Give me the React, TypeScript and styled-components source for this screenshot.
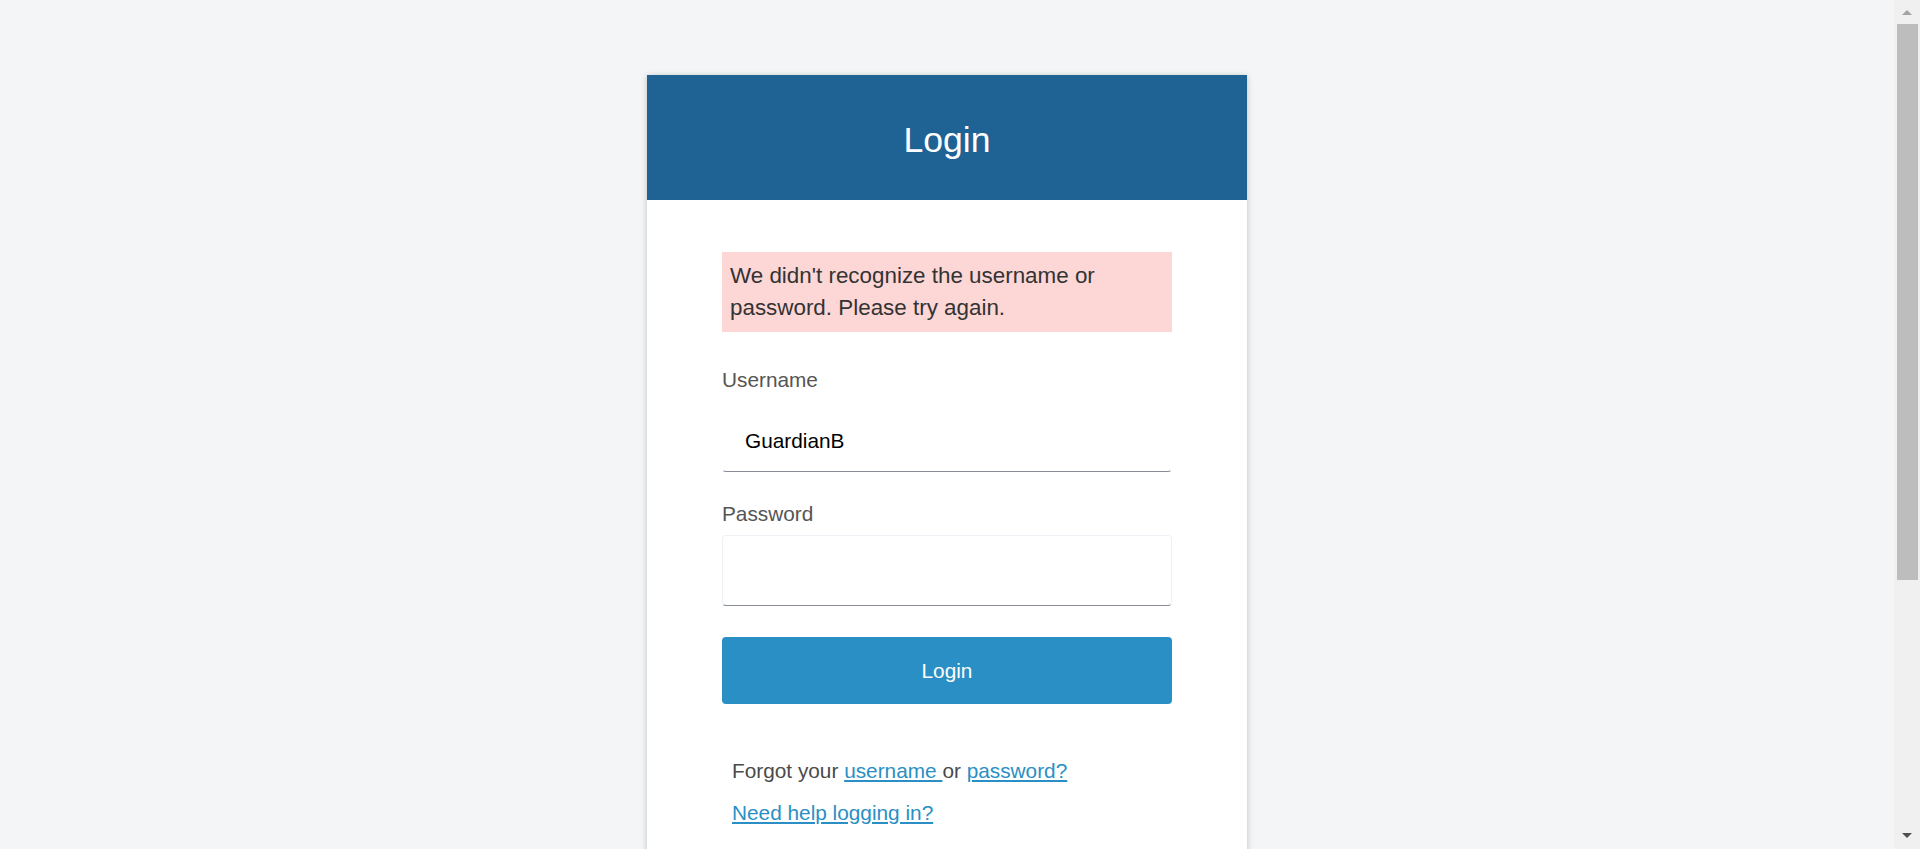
import React from "react";
import styled, { createGlobalStyle } from "styled-components";

const GlobalStyle = createGlobalStyle`
  html, body {
    margin: 0;
    padding: 0;
    background: #f4f5f7;
    font-family: "Liberation Sans", Arial, Helvetica, sans-serif;
  }
  * { box-sizing: border-box; }
`;

const Page = styled.div`
  min-height: 1250px;
  padding-top: 75px;
  padding-right: 26px;
  display: flex;
  flex-direction: column;
  align-items: center;
`;

const Card = styled.div`
  width: 600px;
  background: #ffffff;
  box-shadow: 0 1px 6px rgba(0, 0, 0, 0.22);
`;

const Header = styled.div`
  height: 125px;
  padding-top: 7px;
  background: #1e6394;
  display: flex;
  align-items: center;
  justify-content: center;
`;

const Title = styled.h1`
  margin: 0;
  font-size: 35.6px;
  font-weight: 400;
  color: #ffffff;
  line-height: 1;
`;

const Body = styled.div`
  padding: 52px 75px 60px 75px;
  display: flex;
  flex-direction: column;
`;

const ErrorBox = styled.div`
  background: #fdd6d6;
  color: #333333;
  font-size: 22.4px;
  line-height: 32px;
  padding: 8px;
`;

const Label = styled.label<{ $top: number }>`
  display: block;
  margin-top: ${(p) => p.$top}px;
  font-size: 20.8px;
  line-height: 30px;
  color: #555555;
`;

const Input = styled.input<{ $outlined?: boolean }>`
  display: block;
  width: 100%;
  height: 71px;
  margin-top: 6px;
  padding: 9px 22px 0 22px;
  font-family: "Liberation Sans", Arial, Helvetica, sans-serif;
  font-size: 20.8px;
  color: #000000;
  background: #ffffff;
  border: 1px solid ${(p) => (p.$outlined ? "#eef2f6" : "#ffffff")};
  border-bottom: 1px solid #878c96;
  border-radius: 4px;
  outline: none;
`;

const Button = styled.button`
  margin-top: 31px;
  width: 100%;
  height: 67px;
  border: none;
  border-radius: 4px;
  background: #2a8fc4;
  color: #ffffff;
  font-family: "Liberation Sans", Arial, Helvetica, sans-serif;
  font-size: 20.8px;
  cursor: pointer;
`;

const Help = styled.div`
  margin-top: 52px;
  padding-left: 10px;
  display: flex;
  flex-direction: column;
  gap: 12px;
`;

const HelpLine = styled.p`
  margin: 0;
  font-size: 20.8px;
  line-height: 30px;
  color: #4a4a4a;
`;

const Link = styled.a`
  color: #2a8fc4;
  text-decoration: underline;
  cursor: pointer;
`;

/* Browser scrollbar as seen in the screenshot (overlays the page edge) */
const ScrollBar = styled.div`
  position: fixed;
  top: 0;
  right: 0;
  width: 26px;
  height: 100vh;
  background: #f0f0f0;
  display: flex;
  flex-direction: column;
  align-items: center;
`;

const ArrowSlot = styled.div<{ $dir: "up" | "down" }>`
  height: 24px;
  width: 100%;
  display: flex;
  justify-content: center;
  align-items: ${(p) => (p.$dir === "up" ? "flex-start" : "flex-end")};
`;

const Arrow = styled.div<{ $dir: "up" | "down"; $color: string }>`
  width: 0;
  height: 0;
  border-left: 5.5px solid transparent;
  border-right: 5.5px solid transparent;
  ${(p) =>
    p.$dir === "up"
      ? `border-bottom: 5px solid ${p.$color}; margin-top: 10px;`
      : `border-top: 5px solid ${p.$color}; margin-bottom: 11px;`}
`;

const Track = styled.div`
  flex: 1;
  width: 100%;
  padding: 0 2px 0 3px;
`;

const Thumb = styled.div`
  height: 556px;
  background: #bdbdbd;
`;

export default function App() {
  return (
    <>
      <GlobalStyle />
      <Page>
        <Card>
          <Header>
            <Title>Login</Title>
          </Header>
          <Body>
            <ErrorBox>
              We didn't recognize the username or password. Please try again.
            </ErrorBox>
            <Label $top={33} htmlFor="username">Username</Label>
            <Input id="username" type="text" defaultValue="GuardianB" />
            <Label $top={27} htmlFor="password">Password</Label>
            <Input id="password" type="password" defaultValue="" $outlined />
            <Button type="button">Login</Button>
            <Help>
              <HelpLine>
                Forgot your <Link href="#">username </Link>or{" "}
                <Link href="#">password?</Link>
              </HelpLine>
              <HelpLine>
                <Link href="#">Need help logging in?</Link>
              </HelpLine>
            </Help>
          </Body>
        </Card>
      </Page>
      <ScrollBar aria-hidden="true">
        <ArrowSlot $dir="up">
          <Arrow $dir="up" $color="#a3a3a3" />
        </ArrowSlot>
        <Track>
          <Thumb />
        </Track>
        <ArrowSlot $dir="down">
          <Arrow $dir="down" $color="#505050" />
        </ArrowSlot>
      </ScrollBar>
    </>
  );
}
